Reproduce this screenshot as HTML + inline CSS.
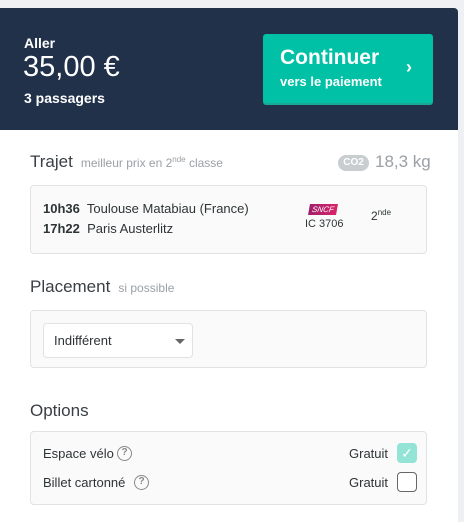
<!DOCTYPE html>
<html><head><style>
*{margin:0;padding:0;box-sizing:border-box}
body{width:464px;height:522px;background:#eef0f4;font-family:"Liberation Sans",sans-serif;position:relative;overflow:hidden;color:#2d3436}
.panel{position:absolute;left:0;top:8px;width:458px;height:514px;background:#fff;border-top-right-radius:4px;overflow:hidden}
.hdr{position:absolute;left:0;top:0;width:458px;height:122px;background:#22314a;color:#fff}
.a{position:absolute}
.btn{position:absolute;left:263px;top:26px;width:170px;height:69px;background:#00c0a5;border-radius:3px;box-shadow:0 2px 0 #18a893;color:#fff}
.box{position:absolute;left:30px;width:397px;background:#fafafa;border:1px solid #dfe3e6;border-radius:4px}
h2{position:absolute;left:30px;font-weight:normal;font-size:17px;color:#3a3f44}
.sub{font-size:12px;color:#9aa0a5}
.q{position:absolute;top:0;width:15px;height:15px;border:1.5px solid #888;border-radius:50%;font-size:10px;text-align:center;line-height:12px;color:#888;font-weight:bold}
</style></head><body>
<div class="panel">
<div class="hdr">
<div class="a" style="left:24px;top:27px;font-size:14px;font-weight:bold">Aller</div>
<div class="a" style="left:23px;top:43px;font-size:29px;">35,00 €</div>
<div class="a" style="left:24px;top:82px;font-size:14px;font-weight:bold">3 passagers</div>
<div class="btn">
<div class="a" style="left:17px;top:12px;font-size:21px;font-weight:bold">Continuer</div>
<div class="a" style="left:17px;top:40px;font-size:13px;font-weight:bold">vers le paiement</div>
<div class="a" style="left:143px;top:23px;font-size:18px;font-weight:bold">›</div>
</div>
</div>
<h2 style="top:144px">Trajet <span class="sub">&nbsp;meilleur prix en 2<sup style="font-size:8px">nde</sup> classe</span></h2>
<div class="a" style="left:338px;top:147px;width:31px;height:16px;background:#c8cdd0;border-radius:8px;color:#fff;font-size:10px;font-weight:bold;text-align:center;line-height:16px">CO2</div>
<div class="a" style="left:375px;top:144px;font-size:17px;color:#9aa0a5">18,3 kg</div>
<div class="box" style="top:177px;height:69px">
<div class="a" style="left:12px;top:15px;font-size:13px"><b>10h36</b>&nbsp; Toulouse Matabiau (France)</div>
<div class="a" style="left:12px;top:35px;font-size:13px"><b>17h22</b>&nbsp; Paris Austerlitz</div>
<div class="a" style="left:278px;top:18px;width:28px;height:11px;background:linear-gradient(90deg,#a01f6b,#d8256a);color:#fff;font-size:8px;font-style:italic;text-align:center;line-height:11px;transform:skewX(-10deg)">SNCF</div>
<div class="a" style="left:274px;top:32px;font-size:11px">IC 3706</div>
<div class="a" style="left:340px;top:22px;font-size:12px">2<sup style="font-size:8px">nde</sup></div>
</div>
<h2 style="top:269px">Placement <span class="sub">&nbsp;si possible</span></h2>
<div class="box" style="top:302px;height:58px">
<div class="a" style="left:12px;top:12px;width:150px;height:35px;background:#fff;border:1px solid #dfe3e6;border-radius:4px;font-size:13px;padding:9px 0 0 10px">Indifférent
<div class="a" style="left:131px;top:15px;border-left:5px solid transparent;border-right:5px solid transparent;border-top:5px solid #666"></div></div>
</div>
<h2 style="top:393px">Options</h2>
<div class="box" style="top:423px;height:74px">
<div class="a" style="left:12px;top:14px;font-size:13px">Espace vélo</div>
<div class="q" style="left:86px;top:14px">?</div>
<div class="a" style="left:12px;top:43px;font-size:13px">Billet cartonné</div>
<div class="q" style="left:103px;top:43px">?</div>
<div class="a" style="left:318px;top:14px;font-size:13px">Gratuit</div>
<div class="a" style="left:318px;top:43px;font-size:13px">Gratuit</div>
<div class="a" style="left:366px;top:11px;width:20px;height:20px;background:#93e3d6;border-radius:4px;color:#fff;font-size:14px;text-align:center;line-height:20px">✓</div>
<div class="a" style="left:366px;top:40px;width:20px;height:20px;border:1.5px solid #666;border-radius:4px;background:#fff"></div>
</div>
</div>
</body></html>
